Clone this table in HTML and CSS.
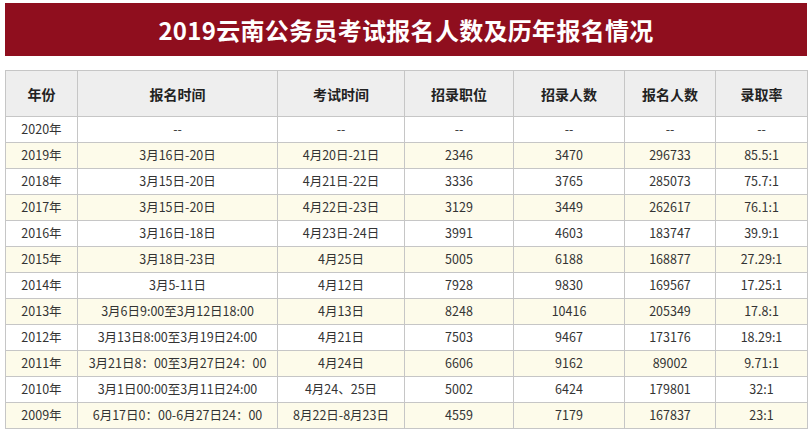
FILE: index.html
```html
<!DOCTYPE html>
<html lang="zh-CN">
<head>
<meta charset="utf-8">
<title>2019云南公务员考试报名人数及历年报名情况</title>
<link rel="stylesheet" href="styles.css">
</head>
<body>
<div class="page">
  <div class="title">2019云南公务员考试报名人数及历年报名情况</div>
  <table class="data">
    <colgroup>
      <col class="c1"><col class="c2"><col class="c3"><col class="c4"><col class="c5"><col class="c6"><col class="c7">
    </colgroup>
    <thead>
      <tr><th>年份</th><th>报名时间</th><th>考试时间</th><th>招录职位</th><th>招录人数</th><th>报名人数</th><th>录取率</th></tr>
    </thead>
    <tbody>
      <tr><td>2020年</td><td>--</td><td>--</td><td>--</td><td>--</td><td>--</td><td>--</td></tr>
      <tr><td>2019年</td><td>3月16日-20日</td><td>4月20日-21日</td><td>2346</td><td>3470</td><td>296733</td><td>85.5:1</td></tr>
      <tr><td>2018年</td><td>3月15日-20日</td><td>4月21日-22日</td><td>3336</td><td>3765</td><td>285073</td><td>75.7:1</td></tr>
      <tr><td>2017年</td><td>3月15日-20日</td><td>4月22日-23日</td><td>3129</td><td>3449</td><td>262617</td><td>76.1:1</td></tr>
      <tr><td>2016年</td><td>3月16日-18日</td><td>4月23日-24日</td><td>3991</td><td>4603</td><td>183747</td><td>39.9:1</td></tr>
      <tr><td>2015年</td><td>3月18日-23日</td><td>4月25日</td><td>5005</td><td>6188</td><td>168877</td><td>27.29:1</td></tr>
      <tr><td>2014年</td><td>3月5-11日</td><td>4月12日</td><td>7928</td><td>9830</td><td>169567</td><td>17.25:1</td></tr>
      <tr><td>2013年</td><td>3月6日9:00至3月12日18:00</td><td>4月13日</td><td>8248</td><td>10416</td><td>205349</td><td>17.8:1</td></tr>
      <tr><td>2012年</td><td>3月13日8:00至3月19日24:00</td><td>4月21日</td><td>7503</td><td>9467</td><td>173176</td><td>18.29:1</td></tr>
      <tr><td>2011年</td><td>3月21日8：00至3月27日24：00</td><td>4月24日</td><td>6606</td><td>9162</td><td>89002</td><td>9.71:1</td></tr>
      <tr><td>2010年</td><td>3月1日00:00至3月11日24:00</td><td>4月24、25日</td><td>5002</td><td>6424</td><td>179801</td><td>32:1</td></tr>
      <tr><td>2009年</td><td>6月17日0：00-6月27日24：00</td><td>8月22日-8月23日</td><td>4559</td><td>7179</td><td>167837</td><td>23:1</td></tr>
    </tbody>
  </table>
</div>
</body>
</html>
```
FILE: styles.css
```css
html, body {
  margin: 0;
  padding: 0;
  background: #ffffff;
}
.page {
  padding: 3px 4px 0 5px;
  font-family: "Noto Sans CJK SC", "Noto Sans", sans-serif;
  color: #333333;
}
.title {
  background: #8f0e1e;
  color: #ffffff;
  height: 53px;
  line-height: 53px;
  text-align: center;
  font-size: 24px;
  font-weight: bold;
  letter-spacing: 0.3px;
}
.data {
  margin-top: 14px;
  width: 803px;
  border-collapse: collapse;
  table-layout: fixed;
  font-size: 12.5px;
}
.c1 { width: 72px; }
.c2 { width: 200px; }
.c3 { width: 127px; }
.c4 { width: 109px; }
.c5 { width: 111px; }
.c6 { width: 91px; }
.c7 { width: 92px; }
.data th, .data td {
  border: 1px solid #c6c6c6;
  text-align: center;
  padding: 0;
  line-height: 1;
  white-space: nowrap;
}
.data th {
  background: #eeeeee;
  height: 45px;
  font-size: 14px;
  font-weight: bold;
  color: #222222;
}
.data td {
  height: 25px;
}
.data tbody tr:nth-child(even) td {
  background: #fdfbea;
}
```
